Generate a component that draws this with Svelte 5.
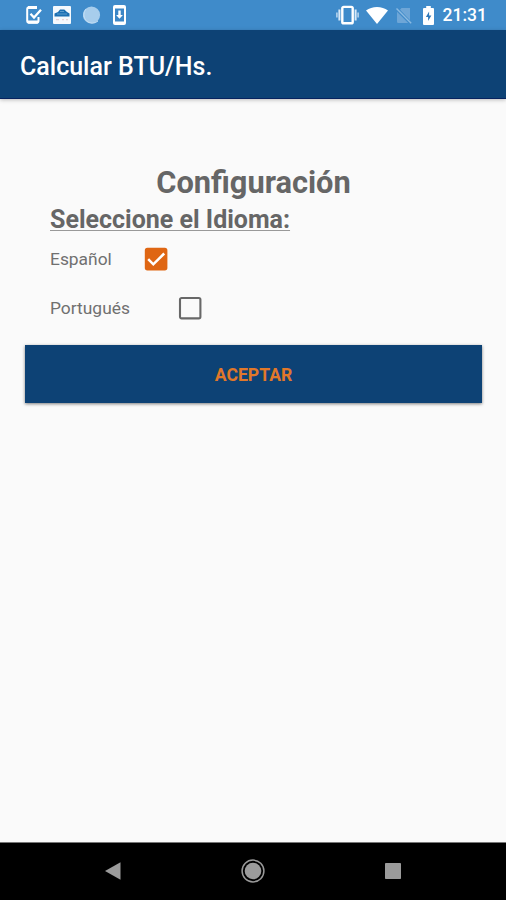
<script>
  let languages = $state([
    { id: 'es', label: 'Español', gap: 32, checked: true },
    { id: 'pt', label: 'Portugués', gap: 48, checked: false }
  ]);

  function select(id) {
    for (const language of languages) language.checked = language.id === id;
  }
</script>

<div class="screen">
  <header class="status">
    <div class="group left">
      <svg width="16" height="20" viewBox="0 0 16 20">
        <path d="M11 2.2H3.2Q1.2 2.2 1.2 4.2V15.8Q1.2 17.8 3.2 17.8H10.5Q12.5 17.8 12.5 15.8V12" fill="none" stroke="#fff" stroke-width="2" />
        <path d="M2 2.5H11M2 17H12" stroke="#fff" stroke-width="3" />
        <path d="M4.5 8.8l3.5 3.7 7-7.7" fill="none" stroke="#fff" stroke-width="2.3" />
      </svg>
      <svg width="18" height="18" viewBox="0 0 18 18">
        <rect width="18" height="18" rx="1" fill="#f5f9fd" />
        <path d="M1.5 10.4V7.4L5 6.1 7 3.6h4.3L14 6l2.5 1.4v3z" fill="#1d70b3" />
        <path d="M7 5.5h4M4 8h10" stroke="#5d9dce" />
        <path d="M3 13.6h3m3 0h2m2 0h2" stroke="#ead0d4" stroke-width="1.4" />
      </svg>
      <svg width="18" height="18" viewBox="0 0 18 18">
        <circle cx="8.5" cy="9" r="8.6" fill="#a7cdec" />
        <path d="M3 3a8.5 8.5 0 0 0 12 12" fill="none" stroke="#c3def4" />
      </svg>
      <svg width="13" height="20" viewBox="0 0 13 20">
        <rect width="13" height="20" rx="2" fill="#fff" />
        <path d="M2 3.5h9v13H2z" fill="#3b86c6" />
        <path d="M5.3 5.5h2.4v4.4h2.2L6.5 13.7 3.1 9.9h2.2z" fill="#fff" />
      </svg>
    </div>
    <div class="group right">
      <svg width="23" height="20" viewBox="0 0 23 20">
        <rect x="6.3" y="1.9" width="10.4" height="16.4" rx="1.4" fill="none" stroke="#fff" stroke-width="2.4" />
        <path d="M3.4 4.5v11m16.2-11v11" stroke="#d9eaf8" stroke-width="2" />
        <path d="M.9 7.5v5m21.2-5v5" stroke="#b5d3ed" stroke-width="1.6" />
      </svg>
      <svg class="wifi" width="22" height="17" viewBox="0 0 22 17">
        <path d="M0 3.6C6-1.2 16-1.2 22 3.6L11 17z" fill="#fff" />
      </svg>
      <svg class="signal" width="16" height="17" viewBox="0 0 16 17">
        <path d="M5.5 1H14v12.2L4 2.7zM1 4.8 12.2 16H2.3Q1 16 1 14.7z" fill="#6ea6d7" />
        <path d="M.5 1.5 15.2 16.3" stroke="#8bbae1" stroke-width="1.4" />
      </svg>
      <svg class="battery" width="11" height="19" viewBox="0 0 11 19">
        <path d="M3.2 0h4.6v2H10q1 0 1 1v15q0 1-1 1H1q-1 0-1-1V3q0-1 1-1h2.2z" fill="#fff" />
        <path d="M6.1 5.6 2.9 11h2.2v4l3.3-5.6H6.1z" fill="#2f78b9" />
      </svg>
      <span class="time">21:31</span>
    </div>
  </header>

  <div class="toolbar"><h1>Calcular BTU/Hs.</h1></div>

  <main>
    <h2>Configuración</h2>
    <h3>Seleccione el Idioma:</h3>
    {#each languages as language (language.id)}
      <div class="option">
        <span>{language.label}</span>
        <button
          class="check"
          role="checkbox"
          aria-checked={language.checked}
          aria-label={language.label}
          style="margin-left: {language.gap}px"
          onclick={() => select(language.id)}
        >
          <svg width="24" height="24" viewBox="0 0 24 24">
            {#if language.checked}
              <rect x=".8" y=".8" width="22.6" height="22.6" rx="2.6" fill="#df6613" />
              <path d="M4.2 12.2l5.1 5.1L20.2 6.5" fill="none" stroke="#fff" stroke-width="2.5" />
            {:else}
              <rect x="2" y="2" width="20.4" height="20.4" rx="1.6" fill="none" stroke="#686868" stroke-width="2.1" />
            {/if}
          </svg>
        </button>
      </div>
    {/each}
    <button class="accept">ACEPTAR</button>
  </main>

  <nav>
    <svg width="16" height="18" viewBox="0 0 16 18">
      <path d="M0 9 15.5.3v17.4z" fill="#9b9b9b" />
    </svg>
    <svg width="24" height="24" viewBox="0 0 24 24">
      <circle cx="12" cy="12" r="10.9" fill="none" stroke="#999" stroke-width="1.5" />
      <circle cx="12" cy="12" r="8.3" fill="#9b9b9b" />
    </svg>
    <svg width="16" height="16" viewBox="0 0 16 16">
      <rect width="16" height="16" rx=".8" fill="#9b9b9b" />
    </svg>
  </nav>
</div>

<style>
  :global(body) {
    margin: 0;
  }

  .screen {
    display: flex;
    flex-direction: column;
    width: 506px;
    height: 900px;
    overflow: hidden;
    background: #fafafa;
    color: #666;
    font-family: Roboto, sans-serif;
  }

  svg {
    display: block;
    flex: none;
  }

  h1,
  h2,
  h3 {
    margin: 0;
    white-space: nowrap;
  }

  .status {
    display: flex;
    flex: none;
    justify-content: space-between;
    box-sizing: border-box;
    height: 30px;
    padding: 0 19px 0 26px;
    background: #3f8bca;
  }

  .group {
    display: flex;
    align-items: center;
  }

  .left {
    gap: 12px;
  }

  .left svg:nth-child(2) {
    margin-left: -1px;
  }

  .wifi {
    margin-left: 7px;
  }

  .signal {
    margin-left: 8px;
  }

  .battery {
    margin-left: 11px;
  }

  .time {
    margin-left: 9px;
    color: #fff;
    font-size: 17.5px;
    font-weight: 500;
    line-height: 32px;
  }

  .toolbar {
    display: flex;
    flex: none;
    align-items: center;
    box-sizing: border-box;
    height: 69px;
    padding: 4px 20px 0;
    border-bottom: 1px solid #07235f;
    background: #0d4275;
    box-shadow: 0 1px 4px rgba(0, 0, 0, 0.25);
  }

  h1 {
    color: #fff;
    font-size: 25px;
    font-weight: 500;
  }

  main {
    display: flex;
    flex: 1;
    flex-direction: column;
    padding: 64px 24px 0 25px;
  }

  h2 {
    font-size: 30.8px;
    font-weight: 700;
    line-height: 40px;
    text-align: center;
  }

  h3 {
    height: 31px;
    margin-left: 25px;
    font-size: 25px;
    font-weight: 700;
    line-height: 33px;
    text-decoration: underline #999;
    text-decoration-thickness: 1px;
    text-underline-offset: 2px;
  }

  .option {
    display: flex;
    align-items: center;
    height: 49px;
    margin-left: 25px;
    color: #707070;
    font-size: 17.4px;
  }

  .check {
    padding: 0;
    border: 0;
    background: none;
  }

  .accept {
    height: 58px;
    margin-top: 13px;
    padding: 2px 0 0;
    border: 0;
    background: #0d4275;
    box-shadow: 0 1px 3px rgba(0, 0, 0, 0.5);
    color: #e17829;
    font: 700 17.6px Roboto, sans-serif;
  }

  nav {
    display: flex;
    flex: none;
    align-items: center;
    justify-content: space-between;
    box-sizing: border-box;
    height: 58px;
    padding: 0 105px 2px;
    border-top: 1px solid #777;
    background: #000;
  }
</style>
